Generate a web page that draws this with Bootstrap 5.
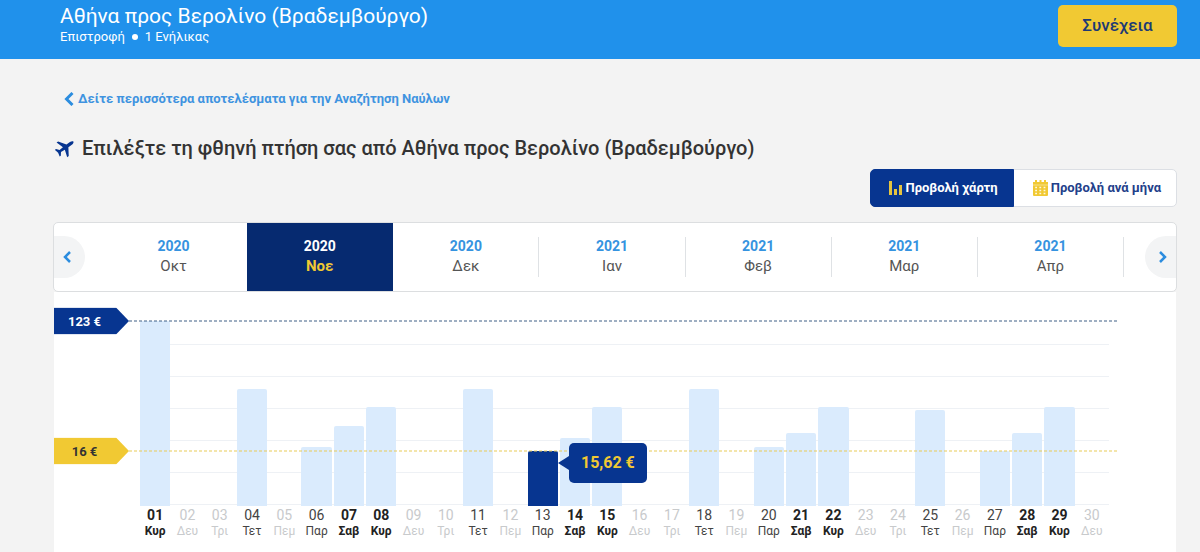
<!DOCTYPE html>
<html lang="el">
<head>
<meta charset="utf-8">
<meta name="viewport" content="width=device-width, initial-scale=1">
<title>Αθήνα προς Βερολίνο (Βραδεμβούργο)</title>
<link href="https://cdn.jsdelivr.net/npm/bootstrap@5.3.0/dist/css/bootstrap.min.css" rel="stylesheet">
<style>
  :root { --navy: #073590; --sky: #2091eb; --sun: #f1c933; --pale: #daebfd; }
  body { font-family: Roboto, "Noto Sans", sans-serif; background: #f3f3f3; color: #333; overflow-x: hidden; }
  .trip-bar { background: var(--sky); height: 59px; padding: 0 23px 0 60px; }
  .trip-title { font-size: 21px; line-height: 24px; }
  .trip-info { font-size: 13px; line-height: 18px; gap: 6px; }
  .btn-go { background: var(--sun); color: #1d3a75; width: 119px; height: 42px; font-size: 17px; font-weight: 500; border-radius: 5px; margin-top: 5px; }
  .btn-go:hover { background: #e3bb22; }
  .page-body { padding: 30px 23px 0 53px; }
  .back-link { color: #3f93e0; font-size: 13px; line-height: 20px; font-weight: 700; margin-left: 11px; }
  .pick-title { font-size: 20px; line-height: 26px; font-weight: 500; margin: 26px 0 8px 2px; }
  .view-switch .btn { height: 38px; font-size: 13px; font-weight: 700; border: 1px solid #dcdfe4; padding: 0 15px 0 16px; background: #fff; color: #23408a; border-radius: 5px; gap: 2px; }
  .view-switch .btn + .btn { padding-left: 18px; }
  .view-switch .btn.active { background: var(--navy); border-color: var(--navy); color: #fff; padding: 0 15px 0 17px; gap: 0; }
  .months { background: #fff; border: 1px solid #dcdee0; border-radius: 5px; height: 70px; margin-top: 15px; }
  .month { border: 0; background: none; color: #555; font-size: 15px; line-height: 20px; padding: 0 1px 2px 0; flex: 1 1 0; }
  .month b { display: block; color: #3593e0; font-size: 14px; font-weight: 700; }
  .month.active { background: #062a70; color: var(--sun); font-weight: 700; }
  .month.active b { color: #fff; }
  .month-lined { background: linear-gradient(#dfe2e5, #dfe2e5) right center / 1px 40px no-repeat; }
  .step { border: 0; background: #f3f4f5; width: 31px; height: 42px; padding: 0; }
  .step-prev { border-radius: 0 21px 21px 0; margin-right: 16px; }
  .step-next { border-radius: 21px 0 0 21px; margin-left: 21px; }
  .chart { background: #fff; margin-left: 1px; margin-right: 1px; padding: 29px 67px 24px 86px; min-height: 260px; }
  .plot { height: 185px; background: repeating-linear-gradient(to top, #eef1f5 0 1px, transparent 1px 32px) left 0 bottom 1px / 100% 162px no-repeat; }
  .day { flex: 1 1 0; min-width: 0; padding-right: 2px; }
  .fare { background: var(--pale); border-radius: 2px 2px 0 0; }
  .fare.best { background: var(--navy); }
  .day-name { flex: 1 1 0; min-width: 0; font-size: 12px; line-height: 15px; padding-right: 2px; color: #c8cacc; }
  .day-name span { display: block; font-size: 14px; line-height: 18px; }
  .day-name.open { color: #444; }
  .day-name.open.weekend { color: #222; font-weight: 700; }
  .level { left: 0; right: 59px; transform: translateY(50%); }
  .tag { width: 75px; height: 27px; font-size: 13px; font-weight: 700; padding-right: 14px; clip-path: polygon(0 0, 62px 0, 100% 50%, 62px 100%, 0 100%); }
  .level-high .tag { background: var(--navy); color: #fff; }
  .level-low .tag { background: var(--sun); color: #333; }
  .dashes { height: 1px; background: repeating-linear-gradient(to right, #3f5f86 0 3px, transparent 3px 5px); }
  .level-low .dashes { background: repeating-linear-gradient(to right, #e8cb58 0 3px, transparent 3px 5px); }
  .fare-tip { left: 100%; top: -8px; margin-left: 11px; width: 78px; height: 40px; background: var(--navy); color: var(--sun); font-size: 16px; font-weight: 700; border-radius: 5px; z-index: 3; }
  .fare-tip::before { content: ""; position: absolute; right: 100%; top: 13px; border: 7px solid transparent; border-right: 11px solid var(--navy); border-left: 0; }
</style>
</head>
<body>
<header class="trip-bar d-flex justify-content-between text-white">
  <div class="pt-1">
    <div class="trip-title">Αθήνα προς Βερολίνο (Βραδεμβούργο)</div>
    <div class="trip-info d-flex align-items-center">Επιστροφή
      <svg width="8" height="8" aria-hidden="true"><circle cx="4" cy="4" r="3" fill="#fff"/></svg>
      1 Ενήλικας</div>
  </div>
  <button type="button" class="btn btn-go p-0">Συνέχεια</button>
</header>

<main class="page-body">
  <a href="#" class="back-link d-flex align-items-center text-decoration-none">
    <svg class="me-1" width="10" height="14" viewBox="0 0 10 14" fill="none" stroke="#2c8ddf" stroke-width="3" aria-hidden="true"><path d="M8.500 1 2.500 7l6 6"/></svg>
    Δείτε περισσότερα αποτελέσματα για την Αναζήτηση Ναύλων</a>

  <h1 class="pick-title d-flex align-items-center">
    <svg class="me-2" width="19" height="20" viewBox="0 0 20 20" fill="#073590" aria-hidden="true"><path transform="rotate(54 10 10)" d="M10-1.500c1 0 1.700 1.500 1.700 3.200v4.500l7.800 5.200v2l-7.800-2.600-.4 4.700 3 2.400v1.500L10 18.300l-4.300 1.100v-1.500l3-2.400-.4-4.700L.5 13.400v-2l7.800-5.200V1.700C8.300 0 9-1.500 10-1.500z"/></svg>
    Επιλέξτε τη φθηνή πτήση σας από Αθήνα προς Βερολίνο (Βραδεμβούργο)</h1>

  <div class="d-flex justify-content-end">
    <div class="btn-group view-switch">
      <button type="button" class="btn active d-flex align-items-center">
        <svg width="17" height="16" viewBox="0 0 17 16" fill="#e5c440" aria-hidden="true"><path d="M1 1h3v14H1zM6 9h3v6H6zM11 5h3v10h-3z"/></svg>Προβολή χάρτη</button>
      <button type="button" class="btn d-flex align-items-center">
        <svg width="17" height="16" viewBox="0 0 17 16" aria-hidden="true"><path fill="#f1c933" d="M1 2h2V0h2v2h2.500V0h2v2H12V0h2v2h2v13q0 1-1 1H2q-1 0-1-1z"/><path stroke="#fff8dc" stroke-width="1.300" stroke-dasharray="1.800 2.400" d="M3.200 7.500h11M3.200 10.500h11M3.200 13.500h11"/><path stroke="#fff8dc" stroke-width=".5" d="M1 5h15"/></svg>Προβολή ανά μήνα</button>
    </div>
  </div>

  <nav class="months d-flex align-items-center overflow-hidden" aria-label="Μήνες">
    <button type="button" class="step step-prev" aria-label="Προηγούμενος">
      <svg class="d-block" width="26" height="14" fill="none" stroke="#2c8ddf" stroke-width="2.500" aria-hidden="true"><path d="M16 2l-5 5 5 5"/></svg></button>
    <button type="button" class="month h-100"><b>2020</b>Οκτ</button>
    <button type="button" class="month h-100 active"><b>2020</b>Νοε</button>
    <button type="button" class="month h-100 month-lined"><b>2020</b>Δεκ</button>
    <button type="button" class="month h-100 month-lined"><b>2021</b>Ιαν</button>
    <button type="button" class="month h-100 month-lined"><b>2021</b>Φεβ</button>
    <button type="button" class="month h-100 month-lined"><b>2021</b>Μαρ</button>
    <button type="button" class="month h-100 month-lined"><b>2021</b>Απρ</button>
    <button type="button" class="step step-next" aria-label="Επόμενος">
      <svg class="d-block" width="30" height="14" fill="none" stroke="#2c8ddf" stroke-width="2.500" aria-hidden="true"><path d="M15 2l5 5-5 5"/></svg></button>
  </nav>

  <section class="chart position-relative">
    <div class="plot d-flex align-items-end" id="plot"></div>
    <div class="d-flex text-center" id="days"></div>
    <div class="position-absolute top-0 start-0 end-0 pe-none" id="levels"></div>
  </section>
</main>

<script src="https://cdn.jsdelivr.net/npm/bootstrap@5.3.0/dist/js/bootstrap.bundle.min.js"></script>
<script>
  // Bar height in pixels for each day that has a fare
  const fares = {1:185, 4:117, 6:59, 7:80, 8:99, 11:117, 13:55, 14:68, 15:99, 18:117,
                 20:59, 21:73, 22:99, 25:96, 27:55, 28:73, 29:99};
  const names = ['Κυρ', 'Δευ', 'Τρι', 'Τετ', 'Πεμ', 'Παρ', 'Σαβ'];
  const best = 13, plotTop = 29, plotHeight = 185;
  let bars = '', labels = '';
  for (let d = 1; d <= 30; d++) {
    const w = (d - 1) % 7, h = fares[d];
    const tip = d === best ? '<div class="fare-tip position-absolute d-flex align-items-center justify-content-center text-nowrap">15,62 €</div>' : '';
    bars += '<div class="day">' + (h ? `<div class="fare position-relative ${d === best ? 'best' : ''}" style="height:${h}px">${tip}</div>` : '') + '</div>';
    labels += `<div class="day-name ${h ? 'open' : ''} ${w === 0 || w === 6 ? 'weekend' : ''}"><span>${String(d).padStart(2, '0')}</span>${names[w]}</div>`;
  }
  plot.innerHTML = bars;
  days.innerHTML = labels;
  levels.innerHTML = [['high', '123 €', 185], ['low', '16 €', 55]].map(([k, t, h]) =>
    `<div class="level level-${k} position-absolute d-flex align-items-center" style="top:${plotTop + plotHeight - h - 27}px">
       <div class="tag d-flex align-items-center justify-content-center">${t}</div><div class="dashes flex-fill"></div></div>`).join('');
</script>
</body>
</html>
